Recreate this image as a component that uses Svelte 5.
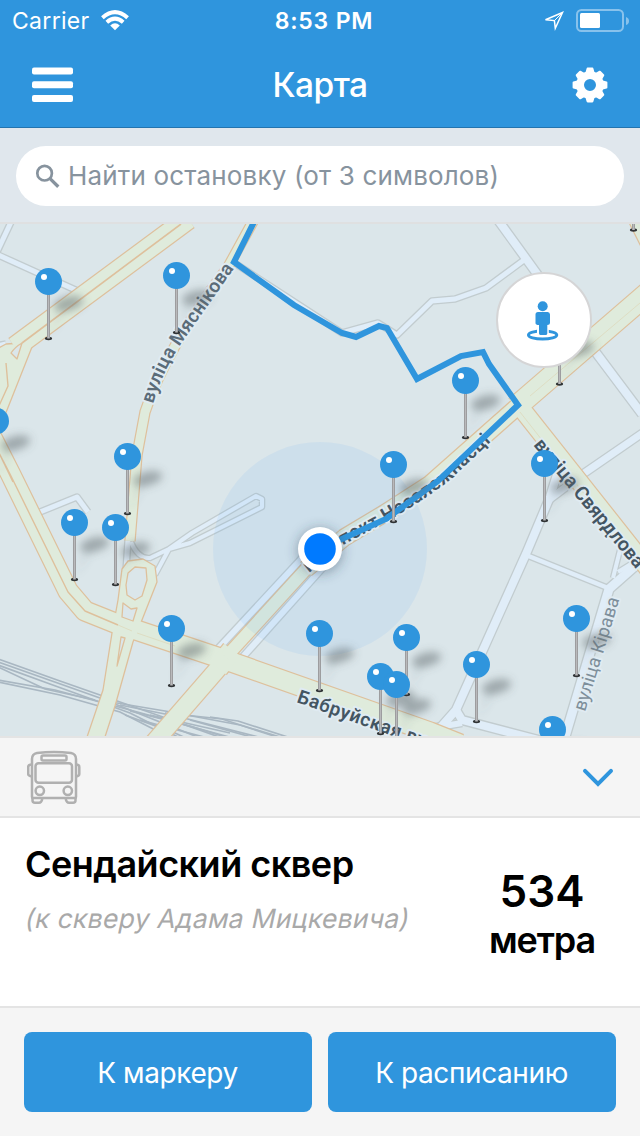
<script>
  const pins = [
    [633.5, 173], [559.5, 327], [48.5, 281.5], [176.5, 275.5], [-4.5, 421],
    [465.5, 380.5], [127.5, 456.5], [544.5, 463.5], [393.5, 464.5],
    [74.5, 522.5], [115.5, 527.5], [576.5, 618.5], [171.5, 628.5],
    [319.5, 633.5], [406.5, 637.5], [476.5, 664.5], [380.5, 676.5],
    [396.5, 684.5], [552.5, 729.5]
  ];

  const lanes = [
    { d: 'M12 220L-4 254', w: 5 },
    { d: 'M-4 254L80 292', w: 5 },
    { d: 'M-4 346L6 344', w: 5 },
    { d: 'M40 512L77 497L88 512', w: 5 },
    { d: 'M131 542Q138 559 150 558L169 549L192 533L256 496L262 499L262 507L190 543L169 549L155 575', w: 4 },
    { d: 'M128 540L126 570', w: 5 },
    { d: 'M216 651L318 541', w: 6 },
    { d: 'M241 659L326 564', w: 6 },
    { d: 'M233 262L342 333L378 323L397 335L432 301L455 299L486 288L524 260', w: 5 },
    { d: 'M498 220L540 278L588 342L642 414', w: 8 },
    { d: 'M550 499L583 474L644 432', w: 7 },
    { d: 'M560 465L550 497L526 554L456 710L441 727L410 735', w: 8 },
    { d: 'M526 555L608 588', w: 4.5 },
    { d: 'M456 710L462 720L546 742', w: 8 },
    { d: 'M415 731L462 723', w: 6 },
    { d: 'M644 558L609 589L564 740', w: 9 },
    { d: 'M613 578L620 550M618 572L644 556', w: 4 }
  ];

  const roads = [
    { d: 'M188 219L15 347', w: 20 },
    { d: 'M-17 420L10 473L68 591L85 611L115 623L220 658L430 732L460 744', w: 19 },
    { d: 'M150 747L222 664', w: 17 },
    { d: 'M218 668L232 650', w: 20 },
    { d: 'M226 657L308 567', w: 12 },
    { d: 'M306 569L345 537L385 513L430 484L518 406', w: 16 },
    { d: 'M516 407L648 293', w: 21 },
    { d: 'M517 403L650 571', w: 17 },
    { d: 'M256 216L228 267Q165 350 145 412L137 455L130 541', w: 9 },
    { d: 'M637 216L660 262', w: 19 }
  ];

  const rails = [
    'M-2 659L60 681L160 716L222 738', 'M-2 662L100 698L200 738',
    'M-2 665L50 684L130 713L180 738', 'M-2 667L45 689L95 700',
    'M-2 680L55 690L130 710L240 740', 'M-2 682L60 695L120 712L165 735',
    'M105 701L165 711L240 725L290 740', 'M120 705L180 717L270 740',
    'M130 711L190 726L235 740', 'M150 715L230 733', 'M140 720L215 740',
    'M165 713L222 719L280 738', 'M210 717L238 721L300 741',
    'M125 715L175 733L190 740', 'M190 720L255 738'
  ];
</script>

<div class="screen">
  <header>
    <div class="status">
      <div class="carrier">
        <span>Carrier</span>
        <svg width="28" height="21" viewBox="0 0 28 21">
          <g fill="none" stroke="#fff" stroke-width="4">
            <path d="M1.4 7.7Q14 -3.3 26.6 7.7" />
            <path d="M5.8 12.2Q14 5 22.2 12.2" />
          </g>
          <path d="M9.2 15.4Q14 11.3 18.8 15.4L14 20.2Z" fill="#fff" />
        </svg>
      </div>
      <div class="time">8:53 PM</div>
      <div class="power">
        <svg width="22" height="22" viewBox="0 0 22 22">
          <path d="M2.5 9.7L19.5 2.5L12.3 18.3L11.4 10.6Z" fill="none" stroke="#fff" stroke-width="1.5" />
          <path d="M19 3L11.4 10.6" stroke="#fff" stroke-width="1" />
        </svg>
        <svg width="54" height="24" viewBox="0 0 54 24">
          <rect x="1" y="1" width="46" height="21" rx="4.5" fill="none" stroke="#fff" stroke-opacity=".43" stroke-width="2" />
          <rect x="4" y="4" width="20" height="15" rx="1.5" fill="#fff" />
          <path d="M50 8Q53 9 53 12T50 16Z" fill="#fff" fill-opacity=".43" />
        </svg>
      </div>
    </div>
    <nav>
      <svg width="42" height="36" viewBox="0 0 42 36" fill="#fff">
        <rect y=".6" width="41" height="7" rx="2" />
        <rect y="14.3" width="41" height="7" rx="2" />
        <rect y="28" width="41" height="7" rx="2" />
      </svg>
      <h1>Карта</h1>
      <svg class="gear" width="36" height="36" viewBox="-18 -18 36 36">
        <circle r="9.9" fill="none" stroke="#fff" stroke-width="7.8" />
        {#each [0, 45, 90, 135, 180, 225, 270, 315] as a}
          <path d="M-5 -11L-3.4 -16.6Q-3.2 -17.4 -2.4 -17.4H2.4Q3.2 -17.4 3.4 -16.6L5 -11Z" fill="#fff" transform="rotate({a})" />
        {/each}
      </svg>
    </nav>
  </header>

  <div class="search">
    <div class="field">
      <svg width="26" height="26" viewBox="0 0 26 26" fill="none" stroke="#87939e">
        <circle cx="9.6" cy="10.2" r="7.3" stroke-width="2.7" />
        <path d="M14.8 15.4L23.3 23.7" stroke-width="3.3" />
      </svg>
      <span>Найти остановку (от 3 символов)</span>
    </div>
  </div>

  <main>
    <svg class="map" width="640" height="512" viewBox="0 224 640 512">
      <defs>
        <filter id="soft" x="-60%" y="-100%" width="220%" height="300%"><feGaussianBlur stdDeviation="4" /></filter>
        <filter id="halo" x="-50%" y="-50%" width="200%" height="200%"><feGaussianBlur stdDeviation="6" /></filter>
        <linearGradient id="pole"><stop offset="0" stop-color="#8f8f91" /><stop offset=".5" stop-color="#b9b9bb" /><stop offset="1" stop-color="#8f8f91" /></linearGradient>
        <path id="p1" d="M153 404Q163 370 183 341L238 263" />
        <path id="p2" d="M533 445L650 586" />
        <path id="p3" d="M309 573L345 544L384 523Q425 500 450 480L500 433" />
        <path id="p4" d="M296 702L450 756" />
        <path id="p5" d="M585 712L623 588" />
      </defs>
      <rect y="224" width="640" height="512" fill="#dbe6ea" />

      <g fill="none" stroke="#a9b7c2" stroke-width="1.7">
        {#each rails as d}<path {d} />{/each}
      </g>

      <g fill="none" stroke-linejoin="round">
        {#each lanes as l}<path d={l.d} stroke="#c2cccf" stroke-width={l.w + 2.6} />{/each}
        {#each lanes as l}<path d={l.d} stroke="#e0edf8" stroke-width={l.w} />{/each}
      </g>

      <g fill="none" stroke-linejoin="round">
        {#each roads as r}<path d={r.d} stroke="#dec09c" stroke-width={r.w + 2.4} />{/each}
        <path d="M-5 350L6 344L22 343L32 347L7 410L-5 440Z" fill="#dfebdc" stroke="#dec09c" stroke-width="1.3" />
        <path d="M122 569L128 561L143 559L155 566L157 582L140 625L133 642L115 706L104 740H86L103 690L112 633L118 600Z" fill="#dfebdc" stroke="#dec09c" stroke-width="1.3" />
        {#each roads as r}<path d={r.d} stroke="#dfebdc" stroke-width={r.w} />{/each}
        <path d="M128 573L135 567L146 568L147 580L142 596L135 600L127 595L126 585Z" fill="#dbe6ea" stroke="#dec09c" stroke-width="1.3" />
        <path d="M123 603L131 609L137 608L133 621L122 617Z" fill="#dbe6ea" stroke="#dec09c" stroke-width="1.3" />
        <path d="M121 637L125 638L117 666Z" fill="#dbe6ea" stroke="#dec09c" stroke-width="1.3" />
        <path d="M11 353Q15 347 22 343L17 359Z" fill="#dbe6ea" stroke="#dec09c" stroke-width="1.3" />
        <path d="M181 224L22 343" stroke="#dec09c" stroke-width="1.6" />
        <path d="M6 363L8 386L-2 408M-4 447L10 474L68 592L85 611L118 625M0 455L13 482" stroke="#dec09c" stroke-width="1.4" />
        <path d="M118 625L132 631M137 633L175 646M520 412L636 560M530 396L640 303" stroke="#ddd9bd" stroke-width=".8" />
      </g>

      <circle cx="320" cy="549" r="107" fill="#007aff" fill-opacity=".064" />

      <g class="labels">
        <text font-size="19" textLength="160"><textPath href="#p1">вуліца Мяснікова</textPath></text>
        <text class="dark" font-size="19.5" textLength="162"><textPath href="#p2">вуліца Свярдлова</textPath></text>
        <text class="dark" font-size="19"><textPath href="#p3">праспект Незалежнасці</textPath></text>
        <text class="dark" font-size="19"><textPath href="#p4">Бабруйская вуліца</textPath></text>
        <text class="light" font-size="18.5" textLength="119"><textPath href="#p5">вуліца Кірава</textPath></text>
      </g>

      <path d="M256 218L234 262L294 305L342 333L356 337L379 326L387 328L417 379L461 356L483 352L489 364L518 405L438 481L386 519L320 549" fill="none" stroke="#2f95dd" stroke-width="6" />

      <g fill="#5b6569" fill-opacity=".48" filter="url(#soft)">
        {#each pins as [x, y]}
          <ellipse cx={x + 20} cy={y + 22} rx="15" ry="7" transform="rotate(-14 {x + 20} {y + 22})" />
          <path d="M{x + 2} {y + 53}L{x + 10} {y + 28}L{x + 20} {y + 24}Z" fill-opacity=".12" />
        {/each}
      </g>
      {#each pins as [x, y]}
        <ellipse cx={x} cy={y + 57} rx="3.6" ry="1.7" fill="#303335" />
        <rect x={x - 1.5} y={y + 12} width="3" height="45" fill="url(#pole)" />
        <circle cx={x} cy={y} r="13.5" fill="#2f95dd" />
        <circle cx={x - 4.5} cy={y - 4.5} r="3" fill="#fff" />
      {/each}

      <circle cx="320" cy="551" r="23" fill="#33475a" fill-opacity=".4" filter="url(#halo)" />
      <circle cx="320" cy="549" r="22" fill="#fff" />
      <circle cx="320" cy="549" r="15.8" fill="#007aff" />
    </svg>
    <div class="locate">
      <svg width="36" height="42" viewBox="525 300 36 42">
        <ellipse cx="542.6" cy="335" rx="14.2" ry="4" fill="none" stroke="#2f95dd" stroke-width="2.9" />
        <path d="M537 328H548.8V333H537Z" fill="#fff" />
        <circle cx="542.7" cy="306.3" r="5" fill="#2f95dd" />
        <path d="M538 312H547.6Q550 312 550 314.5V323Q550 325 547.3 325V333.6Q547.3 335 546 335H540.4Q539 335 539 333.6V325Q535.5 325 535.5 323V314.5Q535.5 312 538 312Z" fill="#2f95dd" />
      </svg>
    </div>
  </main>

  <section class="kind">
    <svg width="54" height="54" viewBox="0 0 54 54" fill="none" stroke="#b0b0b0" stroke-width="2.5" stroke-linejoin="round">
      <path d="M5 47V9Q5 4 10 3Q27 1 44 3Q49 4 49 9V47Q49 48 48 48H6Q5 48 5 47Z" />
      <rect x="14.5" y="5.5" width="25" height="5" rx="1.5" />
      <rect x="8.5" y="13.3" width="36.5" height="19.5" rx="3" />
      <circle cx="12.8" cy="40.8" r="4.2" />
      <circle cx="40.8" cy="40.8" r="4.2" />
      <path d="M5 14.5Q1.2 14.5 1.2 17V24Q1.2 26 5 26.5M49 14.5Q52.3 14.5 52.3 17V24Q52.3 26 49 26.5" />
      <path d="M5.5 48V50.5Q5.5 52.7 8 52.7H12Q14.5 52.7 15.3 49M48.5 48V50.5Q48.5 52.7 46 52.7H42Q39.5 52.7 38.7 49" />
    </svg>
    <svg width="34" height="22" viewBox="0 0 34 22" fill="none" stroke="#2f95dd" stroke-width="4" stroke-linecap="round">
      <path d="M4 4.8L17 18L30 4.8" />
    </svg>
  </section>

  <section class="stop">
    <div class="name">
      <h2>Сендайский сквер</h2>
      <p>(к скверу Адама Мицкевича)</p>
    </div>
    <div class="distance">
      <strong>534</strong>
      <span>метра</span>
    </div>
  </section>

  <footer>
    <button>К маркеру</button>
    <button>К расписанию</button>
  </footer>
</div>

<style>
  :global(body) { margin: 0; }
  .screen {
    width: 640px;
    height: 1136px;
    display: flex;
    flex-direction: column;
    overflow: hidden;
    background: #fff;
    font-family: Inter, "Liberation Sans", sans-serif;
  }
  svg { display: block; flex: none; }
  header {
    box-sizing: border-box;
    height: 128px;
    background: #2f95dd;
    border-bottom: 1px solid #2474ae;
    color: #fff;
  }
  .status {
    box-sizing: border-box;
    display: grid;
    grid-template-columns: 1fr auto 1fr;
    align-items: center;
    height: 40px;
    padding: 1px 10px 0 12px;
    font-size: 23px;
  }
  .carrier { display: flex; align-items: center; gap: 11px; letter-spacing: 0.3px; }
  .carrier svg { margin-top: -1px; }
  .time { font-weight: 600; letter-spacing: 0.8px; padding-left: 6px; }
  .power { display: flex; align-items: center; justify-content: flex-end; gap: 11px; }
  nav {
    display: grid;
    grid-template-columns: 60px 1fr 60px;
    align-items: center;
    height: 89px;
    padding: 0 32px;
  }
  .gear { justify-self: end; }
  h1 { margin: 1px 0 0; text-align: center; font-size: 33.5px; line-height: 42px; font-weight: 500; letter-spacing: -0.5px; }
  .search {
    box-sizing: border-box;
    height: 96px;
    padding: 18px 16px 16px;
    background: #e0e7ed;
    border-bottom: 2px solid #dfe0e1;
  }
  .field {
    display: flex;
    align-items: center;
    gap: 7px;
    height: 60px;
    padding: 0 0 1px 19px;
    box-sizing: border-box;
    border-radius: 30px;
    background: #fff;
    color: #87939e;
    font-size: 26px;
    letter-spacing: 0.16px;
    white-space: nowrap;
  }
  main { position: relative; height: 512px; overflow: hidden; }
  .labels text {
    font-family: Roboto, sans-serif;
    font-weight: 600;
    letter-spacing: 1px;
    fill: #5b6c79;
    stroke: #e0ebf2;
    stroke-width: 4px;
    stroke-linejoin: round;
    paint-order: stroke;
  }
  .labels .dark { fill: #445562; letter-spacing: 0.5px; }
  .labels .light { fill: #7e8f9b; font-weight: 400; }
  .locate {
    position: absolute;
    box-sizing: border-box;
    left: 496px;
    top: 48px;
    width: 96px;
    height: 96px;
    border: 2px solid #d5d5d6;
    border-radius: 50%;
    background: #fff;
    padding: 26px 0 0 27px;
  }
  .kind {
    box-sizing: border-box;
    display: flex;
    align-items: center;
    justify-content: space-between;
    height: 82px;
    padding: 0 25px 0 27px;
    background: #f5f5f5;
    border-top: 2px solid #e4e4e4;
    border-bottom: 2px solid #e4e4e4;
  }
  .stop { display: flex; justify-content: space-between; height: 188px; }
  .name { padding: 24px 0 0 25px; white-space: nowrap; }
  h2 { margin: 0; font-size: 36px; line-height: 44px; font-weight: 600; letter-spacing: -0.5px; }
  p {
    margin: 16px 0 0 1px;
    font-size: 26.5px;
    line-height: 32px;
    letter-spacing: 0.27px;
    color: #a9a9a9;
    transform: skewX(-12deg);
  }
  .distance {
    display: flex;
    flex-direction: column;
    align-items: center;
    width: 196px;
    padding-top: 46px;
    font-weight: 600;
  }
  .distance strong { font-size: 44px; line-height: 54px; font-weight: 600; }
  .distance span { font-size: 36px; line-height: 44px; letter-spacing: -1.1px; }
  footer {
    box-sizing: border-box;
    display: grid;
    grid-template-columns: 1fr 1fr;
    gap: 16px;
    height: 130px;
    padding: 24px;
    background: #f5f5f5;
    border-top: 2px solid #e4e4e4;
  }
  button {
    padding: 1px 1px 0 0;
    border: 0;
    border-radius: 8px;
    background: #2f95dd;
    color: #fff;
    font: 28px Inter, "Liberation Sans", sans-serif;
    letter-spacing: -0.4px;
  }
</style>
